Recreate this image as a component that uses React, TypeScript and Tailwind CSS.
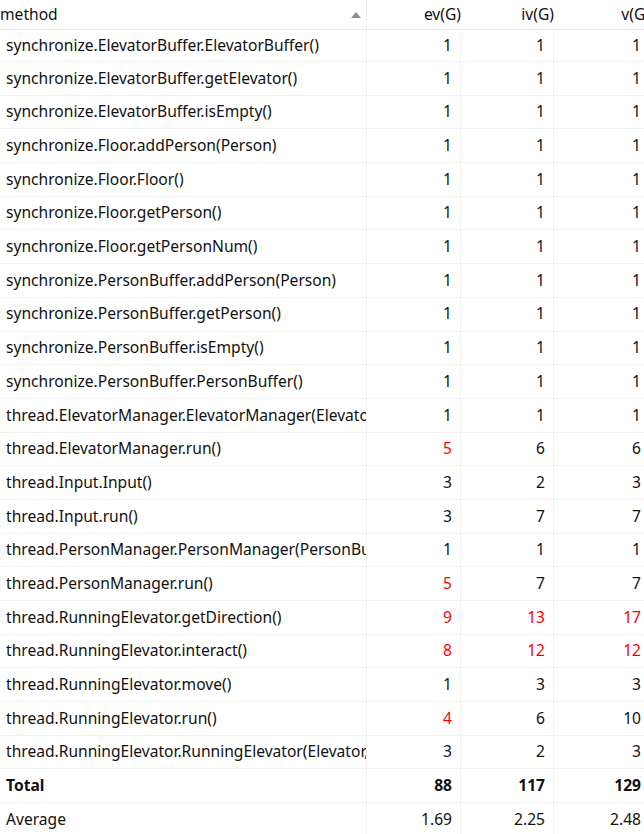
import React from "react";

type Row = {
  name: string;
  ev: string;
  iv: string;
  v: string;
  hot?: [boolean, boolean, boolean];
};

const rows: Row[] = [
  { name: "synchronize.ElevatorBuffer.ElevatorBuffer()", ev: "1", iv: "1", v: "1" },
  { name: "synchronize.ElevatorBuffer.getElevator()", ev: "1", iv: "1", v: "1" },
  { name: "synchronize.ElevatorBuffer.isEmpty()", ev: "1", iv: "1", v: "1" },
  { name: "synchronize.Floor.addPerson(Person)", ev: "1", iv: "1", v: "1" },
  { name: "synchronize.Floor.Floor()", ev: "1", iv: "1", v: "1" },
  { name: "synchronize.Floor.getPerson()", ev: "1", iv: "1", v: "1" },
  { name: "synchronize.Floor.getPersonNum()", ev: "1", iv: "1", v: "1" },
  { name: "synchronize.PersonBuffer.addPerson(Person)", ev: "1", iv: "1", v: "1" },
  { name: "synchronize.PersonBuffer.getPerson()", ev: "1", iv: "1", v: "1" },
  { name: "synchronize.PersonBuffer.isEmpty()", ev: "1", iv: "1", v: "1" },
  { name: "synchronize.PersonBuffer.PersonBuffer()", ev: "1", iv: "1", v: "1" },
  { name: "thread.ElevatorManager.ElevatorManager(ElevatorBuffer)", ev: "1", iv: "1", v: "1" },
  { name: "thread.ElevatorManager.run()", ev: "5", iv: "6", v: "6", hot: [true, false, false] },
  { name: "thread.Input.Input()", ev: "3", iv: "2", v: "3" },
  { name: "thread.Input.run()", ev: "3", iv: "7", v: "7" },
  { name: "thread.PersonManager.PersonManager(PersonBuffer)", ev: "1", iv: "1", v: "1" },
  { name: "thread.PersonManager.run()", ev: "5", iv: "7", v: "7", hot: [true, false, false] },
  { name: "thread.RunningElevator.getDirection()", ev: "9", iv: "13", v: "17", hot: [true, true, true] },
  { name: "thread.RunningElevator.interact()", ev: "8", iv: "12", v: "12", hot: [true, true, true] },
  { name: "thread.RunningElevator.move()", ev: "1", iv: "3", v: "3" },
  { name: "thread.RunningElevator.run()", ev: "4", iv: "6", v: "10", hot: [true, false, false] },
  { name: "thread.RunningElevator.RunningElevator(Elevator, ElevatorBuffer)", ev: "3", iv: "2", v: "3" },
];

function Num({ value, hot, bold }: { value: string; hot?: boolean; bold?: boolean }) {
  return (
    <div
      className={`flex items-center justify-end pr-[8px] border-r border-[#f0f0f0] ${
        hot ? "text-[#ff0000]" : "text-[#111]"
      } ${bold ? "font-bold" : ""}`}
    >
      {value}
    </div>
  );
}

function BodyRow({ row, first }: { row: Row; first?: boolean }) {
  const hot = row.hot ?? [false, false, false];
  return (
    <div
      className={`grid grid-cols-[367px_94px_93px_96px] border-b border-[#f0f0f0] ${
        first ? "h-[32px]" : "h-[33.7px]"
      }`}
    >
      <div className="flex items-center pl-[6px] overflow-hidden whitespace-nowrap border-r border-[#f0f0f0] text-[#111]">
        <span className="block overflow-hidden">{row.name}</span>
      </div>
      <Num value={row.ev} hot={hot[0]} />
      <Num value={row.iv} hot={hot[1]} />
      <Num value={row.v} hot={hot[2]} />
    </div>
  );
}

export default function App() {
  return (
    <div className="w-[644px] h-[834px] overflow-hidden bg-white text-[15.6px] font-['Noto_Sans',sans-serif]">
      <div className="w-[650px]">
        <div className="grid grid-cols-[367px_94px_93px_96px] h-[30px] border-b border-[#e8e8e8] text-[#111]">
          <div className="flex items-center justify-between border-r border-[#ececec] pr-[5px]">
            <span>method</span>
            <svg width="10" height="6" viewBox="0 0 10 6">
              <polygon points="5,0 10,6 0,6" fill="#8c8c8c" />
            </svg>
          </div>
          <div className="flex items-center justify-end">ev(G)</div>
          <div className="flex items-center justify-end">iv(G)</div>
          <div className="flex items-center justify-end">v(G)</div>
        </div>
        {rows.map((r, i) => (
          <BodyRow key={r.name} row={r} first={i === 0} />
        ))}
        <div className="grid grid-cols-[367px_94px_93px_96px] h-[33.7px] border-b border-[#f0f0f0] font-bold text-[#111]">
          <div className="flex items-center pl-[6px] border-r border-[#f0f0f0]">Total</div>
          <Num value="88" bold />
          <Num value="117" bold />
          <Num value="129" bold />
        </div>
        <div className="grid grid-cols-[367px_94px_93px_96px] h-[33.7px] border-b border-[#f0f0f0] text-[#111]">
          <div className="flex items-center pl-[6px] border-r border-[#f0f0f0]">Average</div>
          <Num value="1.69" />
          <Num value="2.25" />
          <Num value="2.48" />
        </div>
      </div>
    </div>
  );
}
